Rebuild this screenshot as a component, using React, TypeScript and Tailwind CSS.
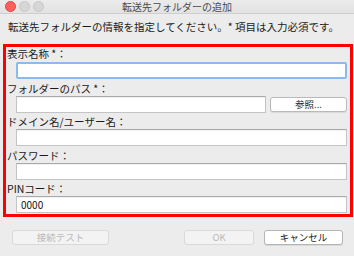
import React from "react";

const fields = [
  { label: "表示名称 *：", focus: true, labelMt: "mt-0", value: "" },
  { label: "フォルダーのパス *：", browse: true, labelMt: "mt-[3px]", value: "" },
  { label: "ドメイン名/ユーザー名：", labelMt: "mt-[2px]", value: "" },
  { label: "パスワード：", labelMt: "mt-[3px]", value: "" },
  { label: "PINコード：", labelMt: "mt-[2px]", value: "0000" },
];

function Field({ label, focus, browse, labelMt, value }: { label: string; focus?: boolean; browse?: boolean; labelMt: string; value: string }) {
  return (
    <div className="flex flex-col">
      <div className={`${labelMt} h-[13px] pl-[1px] text-[10.5px] leading-[13px] text-[#1a1a1a]`}>{label}</div>
      <div className={`flex gap-[4px] pl-[10px] pr-[3px] ${focus ? "mt-[2px]" : "mt-[1px]"}`}>
        <div
          className={`flex h-[17px] flex-1 items-center bg-white px-[4px] text-[10px] text-[#111] ${
            focus
              ? "rounded-[2px] border-[2px] border-[#8db9f1]"
              : "border border-[#c4c4c4] border-t-[#a9a9a9] shadow-[inset_0_1px_1px_rgba(0,0,0,0.06)]"
          }`}
        >
          {value}
        </div>
        {browse && (
          <button className="h-[15px] w-[77px] self-center rounded-[3px] border border-[#b9b9b9] bg-white text-[9.5px] leading-[13px] text-[#222] shadow-[0_1px_0_rgba(0,0,0,0.08)]">
            参照...
          </button>
        )}
      </div>
    </div>
  );
}

export default function App() {
  return (
    <div
      className="h-[256px] w-[354px] overflow-hidden bg-[#ececec]"
      style={{ fontFamily: '"Noto Sans CJK JP", "Noto Sans", sans-serif' }}
    >
      {/* title bar */}
      <div className="relative flex h-[14px] items-center justify-center border-b border-[#cfcfcf] bg-gradient-to-b from-[#ebebeb] to-[#e2e2e2]">
        <div className="absolute left-[5px] top-[1px] flex gap-[3px]">
          <span className="h-[11px] w-[11px] rounded-full border border-[#e0443e] bg-[#fc605c]" />
          <span className="h-[11px] w-[11px] rounded-full border border-[#c8c8c8] bg-[#d6d6d6]" />
          <span className="h-[11px] w-[11px] rounded-full border border-[#c8c8c8] bg-[#d6d6d6]" />
        </div>
        <span className="text-[10px] leading-[12px] text-[#4a4a4a]">転送先フォルダーの追加</span>
      </div>

      <div className="mt-[6px] pl-[8px] text-[10.5px] leading-[14px] text-[#1a1a1a]">
        転送先フォルダーの情報を指定してください。* 項目は入力必須です。
      </div>

      {/* highlighted form area */}
      <div className="ml-[3px] mt-[10px] w-[350px] border-[3px] border-[#ff0000] pb-[1px]">
        {fields.map((f) => (
          <Field key={f.label} {...f} />
        ))}
      </div>

      {/* buttons */}
      <div className="mt-[13px] flex items-center pl-[12px] pr-[11px]">
        <button className="h-[15px] w-[97px] rounded-[3px] border border-[#d9d9d9] bg-[#f3f3f3] text-[9.5px] leading-[13px] text-[#b9b9b9]">
          接続テスト
        </button>
        <button className="ml-auto h-[15px] w-[70px] rounded-[3px] border border-[#d9d9d9] bg-[#f3f3f3] text-[9.5px] leading-[13px] text-[#b9b9b9]">
          OK
        </button>
        <button className="ml-[10px] h-[15px] w-[79px] rounded-[3px] border border-[#b5b5b5] bg-white text-[9.5px] leading-[13px] text-[#1a1a1a] shadow-[0_1px_0_rgba(0,0,0,0.08)]">
          キャンセル
        </button>
      </div>
    </div>
  );
}
